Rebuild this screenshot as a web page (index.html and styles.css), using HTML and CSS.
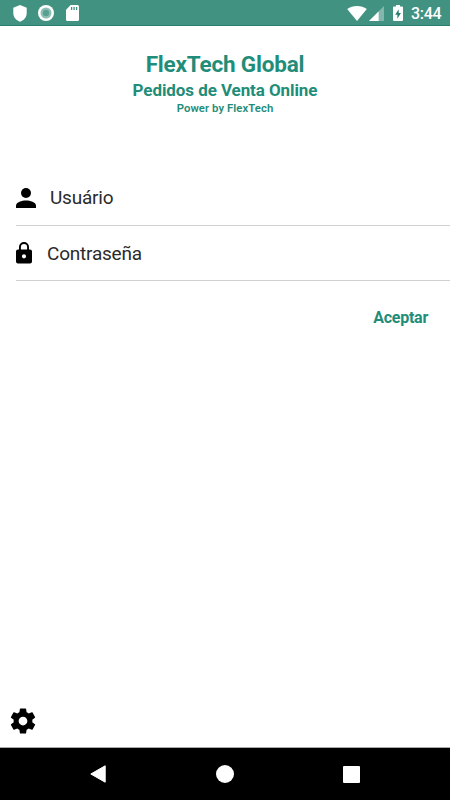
FILE: index.html
```html
<!DOCTYPE html>
<html lang="es">
<head>
<meta charset="utf-8">
<title>FlexTech Global</title>
<link rel="stylesheet" href="styles.css">
</head>
<body>
<div class="screen">
  <header class="status">
    <svg class="shield" width="14" height="17" viewBox="0 0 14 17"><path fill="#fff" d="M7 0 13.700 2.800V8c0 4-2.600 7.300-6.700 8.700C2.900 15.300.300 12 .300 8V2.800Z"/></svg>
    <svg class="record" width="16" height="16" viewBox="0 0 16 16"><circle cx="8" cy="8" r="8" fill="#fff"/><circle cx="8" cy="8" r="5.500" fill="#8dc0b5"/><circle cx="8" cy="8" r="3.200" fill="#58a092"/></svg>
    <svg class="sd" width="13" height="16" viewBox="0 0 13 16"><path fill="#fff" d="M4.700 0h6.800Q13 0 13 1.500v13q0 1.500-1.500 1.500h-10Q0 16 0 14.500V4.800Z"/><path stroke="#429282" stroke-width="1.300" d="M5.600 2v3M8.100 2v3M10.600 2v3"/></svg>
    <span class="grow"></span>
    <svg class="wifi" width="20" height="15" viewBox="0 0 20 15"><path fill="#fff" d="M10 15 .200 3C3 1 6.300 0 10 0s7 1 9.800 3Z"/></svg>
    <svg class="signal" width="15" height="15" viewBox="0 0 15 15"><path fill="#83b7ad" d="M15 0v15H0Z"/><path fill="#fff" d="M9.600 5.400V15H0Z"/></svg>
    <svg class="battery" width="10" height="16" viewBox="0 0 10 16"><path fill="#fff" d="M3 0h4v1.600h2q1 0 1 1V15q0 1-1 1H1q-1 0-1-1V2.600q0-1 1-1h2Z"/><path fill="#277f6d" d="M5.700 4.200 2.200 9.700h2.200v4.100l3.500-5.700H5.700Z"/></svg>
    <span class="clock">3:44</span>
  </header>
  <main class="content">
    <div class="brand">
      <h1>FlexTech Global</h1>
      <h2>Pedidos de Venta Online</h2>
      <p>Power by FlexTech</p>
    </div>
    <div class="fields">
      <div class="field">
        <svg class="user" width="20" height="20" viewBox="0 0 20 20"><circle cx="10" cy="5" r="5"/><path d="M0 20v-2.500C0 14 6 12.400 10 12.400s10 1.600 10 5.100V20Z"/></svg>
        <span>Usuário</span>
      </div>
      <div class="field second">
        <svg class="lock" width="16" height="22" viewBox="0 0 16 22"><path fill-rule="evenodd" d="M2 7.400h1V5a5 5 0 0 1 10 0v2.400h1a2 2 0 0 1 2 2V19.500a2 2 0 0 1-2 2H2a2 2 0 0 1-2-2V9.400a2 2 0 0 1 2-2ZM4.900 7.400h6.200V5a3.100 3.100 0 0 0-6.200 0ZM8 12.200a2.100 2.100 0 1 0 0 4.200a2.100 2.100 0 1 0 0-4.200Z"/></svg>
        <span>Contraseña</span>
      </div>
    </div>
    <div class="accept">Aceptar</div>
    <svg class="gear" width="30" height="30" viewBox="0 0 24 24"><path d="M19.430 12.980c.040-.320.070-.640.070-.980s-.030-.660-.070-.980l2.110-1.650c.190-.150.240-.420.120-.640l-2-3.460c-.120-.220-.390-.300-.610-.220l-2.490 1c-.520-.400-1.080-.730-1.690-.980l-.380-2.650C14.460 2.180 14.250 2 14 2h-4c-.250 0-.460.180-.490.420l-.380 2.650c-.610.250-1.170.590-1.690.980l-2.490-1c-.230-.090-.490 0-.610.220l-2 3.460c-.130.220-.070.490.120.640l2.110 1.650c-.040.320-.070.650-.070.980s.030.660.070.980l-2.110 1.650c-.190.150-.240.420-.120.640l2 3.460c.120.220.390.300.610.220l2.490-1c.520.400 1.080.730 1.690.980l.380 2.650c.030.240.240.420.490.420h4c.250 0 .460-.180.490-.420l.380-2.650c.610-.250 1.170-.590 1.690-.980l2.490 1c.230.090.490 0 .610-.220l2-3.460c.120-.220.070-.490-.120-.640l-2.110-1.650zM12 15.500c-1.930 0-3.500-1.570-3.500-3.500s1.570-3.500 3.500-3.500 3.500 1.570 3.500 3.500-1.570 3.500-3.500 3.500z"/></svg>
  </main>
  <nav class="navbar">
    <svg width="16" height="18" viewBox="0 0 16 18"><path fill="#fff" stroke="#fff" stroke-linejoin="round" d="M15.200.800v16.400L.800 9Z"/></svg>
    <svg width="18" height="18" viewBox="0 0 18 18"><circle cx="9" cy="9" r="9" fill="#fff"/></svg>
    <svg width="17" height="17" viewBox="0 0 17 17"><rect width="17" height="17" rx="1" fill="#fff"/></svg>
  </nav>
</div>
</body>
</html>
```

FILE: styles.css
```css
* { box-sizing: border-box; }
body { margin: 0; font-family: Roboto, sans-serif; }
svg { display: block; flex: none; }
h1, h2, p { margin: 0; }
.screen { width: 450px; height: 800px; display: flex; flex-direction: column; background: #fff; overflow: hidden; }
.status { height: 26px; flex: none; display: flex; align-items: center; padding: 0 9px 0 13px; background: #429282; border-bottom: 1px solid #26806e; }
.shield { margin-top: 1px; }
.record { margin-left: 11px; }
.sd { margin-left: 12px; }
.grow { flex: 1; }
.wifi { margin-top: 1px; }
.signal { margin: 1px 0 0 2px; }
.battery { margin-left: 9px; }
.clock { margin-left: 8px; padding-top: 3px; width: 30px; color: #fff; font-size: 16px; font-weight: 500; line-height: 20px; letter-spacing: -0.300px; white-space: nowrap; }
.content { flex: 1; display: flex; flex-direction: column; }
.brand { height: 144px; padding-top: 24px; text-align: center; color: #1f8d79; }
.brand h1 { font-size: 22.500px; line-height: 28px; font-weight: 700; letter-spacing: -0.200px; }
.brand h2 { font-size: 17px; line-height: 24px; font-weight: 700; letter-spacing: -0.080px; }
.brand p { font-size: 11.300px; line-height: 14px; font-weight: 600; letter-spacing: 0.080px; }
.fields { padding-left: 16px; }
.field { height: 56px; display: flex; align-items: center; border-bottom: 1px solid #d0d0d2; color: #2b2b2b; font-size: 19px; font-weight: 400; letter-spacing: -0.220px; }
.user { margin-right: 14px; }
.field.second { height: 55px; }
.lock { margin-right: 15px; }
.accept { align-self: flex-end; margin: 26px 22px 0 0; color: #1f8d79; font-size: 16px; line-height: 22px; font-weight: 700; letter-spacing: -0.250px; }
.gear { margin: auto 0 11px 8px; }
.navbar { height: 53px; flex: none; display: flex; align-items: center; justify-content: space-between; padding: 0 90px; background: #000; border-top: 1px solid #aaa; }
```
